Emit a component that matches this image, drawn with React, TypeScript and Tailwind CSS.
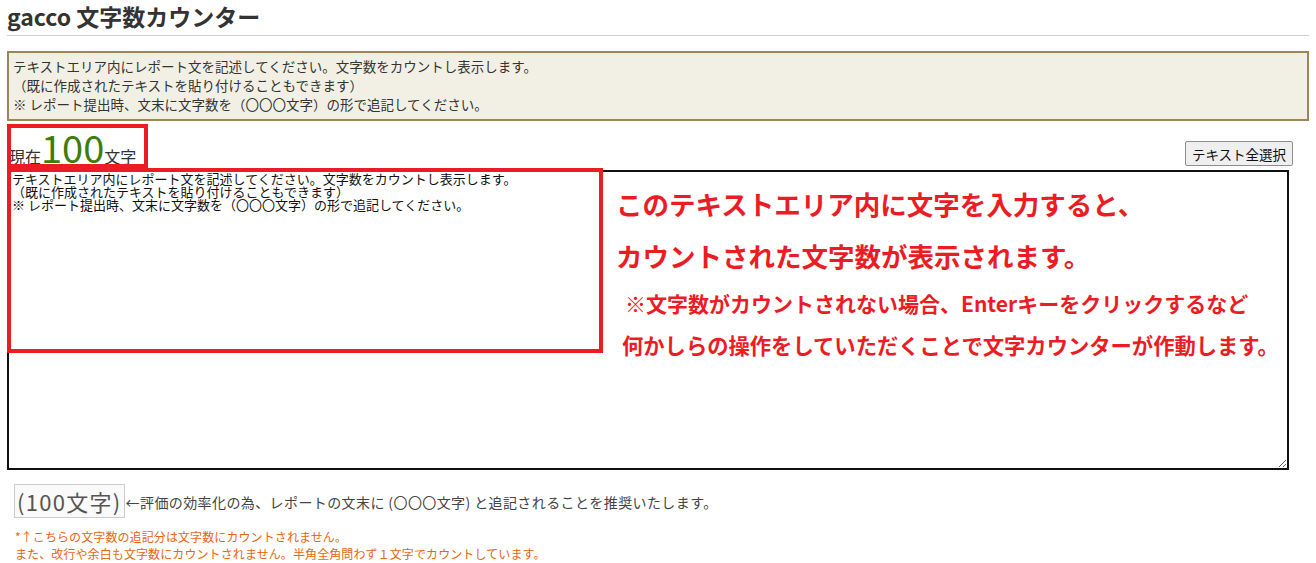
import React, { useState } from 'react';

const initialText =
  'テキストエリア内にレポート文を記述してください。文字数をカウントし表示します。\n（既に作成されたテキストを貼り付けることもできます）\n※ レポート提出時、文末に文字数を（〇〇〇文字）の形で追記してください。';

const App = () => {
  const [text, setText] = useState<string>(initialText);

  return (
    <div
      className="relative min-h-[563px] bg-white px-[7px] text-[#333]"
      style={{ fontFamily: '"Noto Sans CJK JP", "Noto Sans", sans-serif' }}
    >
      <h1 className="h-[36px] border-b border-[#cfcfcf] pt-[1px] text-[23px] font-bold leading-[30px] text-[#333]">
        gacco 文字数カウンター
      </h1>

      <div className="mt-[15px] border-2 border-[#9c8559] bg-[#f2f0e5] px-[4px] pb-[5px] pt-[4px] text-[13.5px] leading-[19px]">
        <p>テキストエリア内にレポート文を記述してください。文字数をカウントし表示します。</p>
        <p>（既に作成されたテキストを貼り付けることもできます）</p>
        <p>※ レポート提出時、文末に文字数を（〇〇〇文字）の形で追記してください。</p>
      </div>

      <div className="flex h-[49px] w-[1286px] items-end justify-between">
        <div className="flex items-baseline pl-[2px] pb-[3px]">
          <span className="text-[16px] leading-[20px]">現在</span>
          <span className="text-[38px] leading-[40px] text-[#3d7d08]">100</span>
          <span className="text-[16px] leading-[20px]">文字</span>
        </div>
        <button className="mb-[4px] h-[25px] rounded-[2px] border border-[#8f8f8f] bg-[#efefef] px-[6px] text-[13.5px] leading-[20px] text-[#111]">
          テキスト全選択
        </button>
      </div>

      <textarea
        value={text}
        onChange={(e) => setText(e.target.value)}
        className="block h-[300px] w-[1282px] border-2 border-[#111] px-[3px] pt-[1px] text-[13px] leading-[12.8px] text-[#111] outline-none"
        style={{ fontFamily: '"Noto Sans CJK JP", monospace' }}
      />

      <div className="mt-[14px] flex items-center pl-[7px]">
        <div className="flex h-[34px] items-center border border-[#cccccc] bg-[#fafafa] px-[2px] text-[22px] tracking-[1.3px] text-[#555]">
          (100文字)
        </div>
        <span className="ml-[1px] mt-[3px] text-[14px] tracking-[0.4px] text-[#444]">
          ←評価の効率化の為、レポートの文末に (〇〇〇文字) と追記されることを推奨いたします。
        </span>
      </div>

      <div className="mt-[10px] pl-[8px] text-[12px] leading-[17px] tracking-[0.1px] text-[#e8650f]">
        <p>*↑こちらの文字数の追記分は文字数にカウントされません。</p>
        <p>また、改行や余白も文字数にカウントされません。半角全角問わず１文字でカウントしています。</p>
      </div>

      {/* annotation overlays */}
      <div className="pointer-events-none absolute left-[7px] top-[124px] h-[44px] w-[141px] border-4 border-[#ec1c24]" />
      <div className="pointer-events-none absolute left-[7px] top-[168px] h-[185px] w-[596px] border-4 border-[#ec1c24]" />
      <div className="pointer-events-none absolute left-[616px] top-[178px] font-bold text-[#ec1c24]">
        <p className="text-[26.5px] leading-[52px]">このテキストエリア内に文字を入力すると、</p>
        <p className="text-[26.5px] leading-[52px]">カウントされた文字数が表示されます。</p>
        <p className="pl-[9px] text-[21px] leading-[42px]">※文字数がカウントされない場合、Enterキーをクリックするなど</p>
        <p className="pl-[6px] text-[21.3px] leading-[42px]">何かしらの操作をしていただくことで文字カウンターが作動します。</p>
      </div>
    </div>
  );
};

export default App;
